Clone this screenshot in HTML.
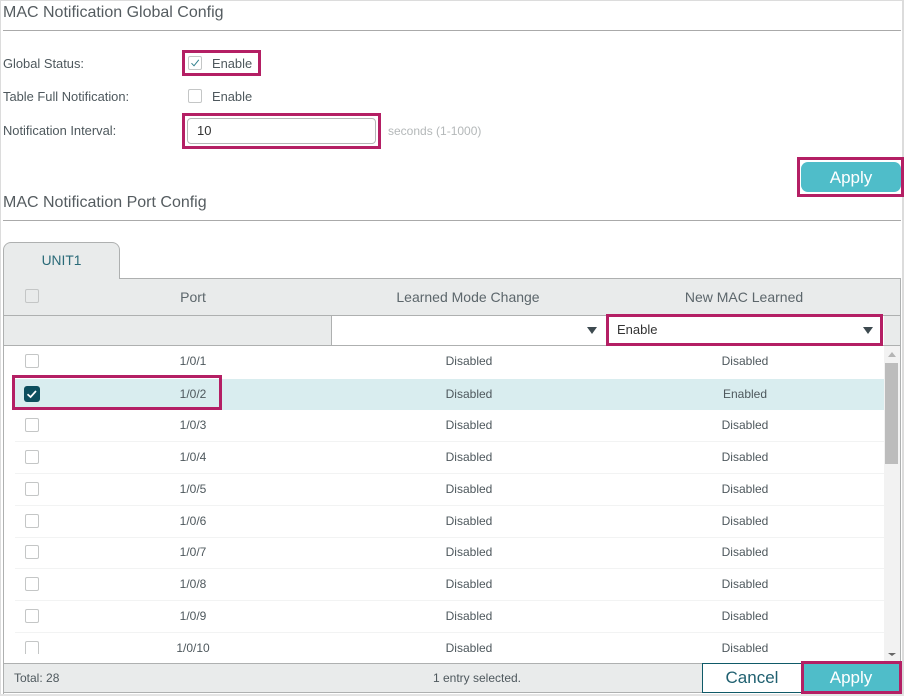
<!DOCTYPE html>
<html><head><meta charset="utf-8"><style>
html,body{margin:0;padding:0;background:#fff}
#p{position:relative;width:904px;height:696px;overflow:hidden;background:#fff;font-family:"Liberation Sans",sans-serif;color:#4a5458}
#p div{position:absolute;box-sizing:border-box}
.t{white-space:nowrap;line-height:16px;height:16px}
.h{font-size:16px;color:#555c60;left:3px}
.l{font-size:12.9px;left:3px;color:#4e585d}
.c{text-align:center;font-size:12px;color:#4e585d}
.th{text-align:center;font-size:14px;color:#5c666b}
.cb{width:14px;height:14px;border:1px solid #c4c6c6;border-radius:2px;background:#fff}
.m{border:3px solid #b41f64}
.ln{height:1px;background:#f2f3f3;left:15px;width:869px}
.ar{width:0;height:0;border-left:5px solid transparent;border-right:5px solid transparent;border-top:7px solid #3d4a50}
</style></head><body><div id="p">
<div style="left:0;top:0;width:904px;height:1px;background:#dcdcdc"></div>
<div style="left:0;top:0;width:1px;height:696px;background:#dcdcdc"></div>
<div style="left:902px;top:0;width:2px;height:696px;background:#dcdcdc"></div>
<div style="left:0;top:694px;width:904px;height:2px;background:#e4e4e4"></div>

<div class="t h" style="top:5px">MAC Notification Global Config</div>
<div style="left:3px;top:30px;width:898px;height:1px;background:#aaa"></div>
<div class="t l" style="top:56px">Global Status:</div>
<div class="t l" style="top:89px">Table Full Notification:</div>
<div class="t l" style="top:123px">Notification Interval:</div>

<div class="m" style="left:182px;top:50px;width:79px;height:26px"></div>
<div class="cb" style="left:188px;top:56px"><svg style="position:absolute;left:0;top:0" width="12" height="12" viewBox="0 0 12 12"><path d="M2.5 6.2L5 8.8L9.8 2.8" fill="none" stroke="#2f7f8c" stroke-width="1"/></svg></div>
<div class="t l" style="left:212px;top:56px">Enable</div>
<div class="cb" style="left:188px;top:89px"></div>
<div class="t l" style="left:212px;top:89px">Enable</div>

<div class="m" style="left:182px;top:113px;width:199px;height:36px"></div>
<div style="left:187px;top:118px;width:189px;height:26px;border:1px solid #b5b7b7;border-radius:4px;background:#fff"></div>
<div class="t" style="left:197px;top:123px;font-size:13px;color:#333">10</div>
<div class="t" style="left:388px;top:123px;font-size:12px;color:#b4b8b9">seconds (1-1000)</div>

<div class="m" style="left:797px;top:157px;width:107px;height:40px"></div>
<div style="left:801px;top:162px;width:100px;height:30px;background:#4fbdc9;border-radius:7px"></div>
<div class="t" style="left:801px;top:169px;width:100px;height:18px;line-height:18px;text-align:center;color:#fff;font-size:17px">Apply</div>

<div class="t h" style="top:195px">MAC Notification Port Config</div>
<div style="left:3px;top:220px;width:898px;height:1px;background:#aaa"></div>

<div style="left:3px;top:242px;width:117px;height:37px;background:#e9ebeb;border:1px solid #aeb0b0;border-bottom:none;border-radius:8px 8px 0 0;z-index:2"></div>
<div class="t" style="left:4px;top:253px;width:115px;text-align:center;font-size:13.8px;color:#2a6a78;z-index:3">UNIT1</div>

<div style="left:3px;top:278px;width:898px;height:68px;background:#e9ebeb;border-top:1px solid #aeb0b0;border-left:1px solid #aeb0b0;border-right:1px solid #aeb0b0"></div>
<div style="left:3px;top:315px;width:898px;height:1px;background:#aeb0b0"></div>
<div style="left:3px;top:345px;width:898px;height:1px;background:#aeb0b0"></div>
<div style="left:3px;top:278px;width:1px;height:416px;background:#aeb0b0"></div>
<div style="left:900px;top:278px;width:1px;height:416px;background:#aeb0b0"></div>

<div class="cb" style="left:25px;top:289px;background:#e9ebeb"></div>
<div class="t th" style="left:93px;top:289px;width:200px">Port</div>
<div class="t th" style="left:368px;top:289px;width:200px">Learned Mode Change</div>
<div class="t th" style="left:644px;top:289px;width:200px">New MAC Learned</div>

<div style="left:331px;top:316px;width:553px;height:29px;background:#fff;border-left:1px solid #aeb0b0"></div>
<div class="ar" style="left:587px;top:327px"></div>
<div class="m" style="left:606px;top:314px;width:277px;height:32px;background:#fff"></div>
<div class="t" style="left:617px;top:322px;font-size:13px;color:#333">Enable</div>
<div class="ar" style="left:863px;top:327px"></div>

<div style="left:15px;top:379px;width:869px;height:31px;background:#d9edef"></div>
<div class="ln" style="top:441px"></div><div class="ln" style="top:473px"></div><div class="ln" style="top:505px"></div><div class="ln" style="top:537px"></div><div class="ln" style="top:568px"></div><div class="ln" style="top:600px"></div><div class="ln" style="top:632px"></div>

<div class="cb" style="left:25px;top:354px"></div>
<div class="cb" style="left:25px;top:418px"></div>
<div class="cb" style="left:25px;top:450px"></div>
<div class="cb" style="left:25px;top:482px"></div>
<div class="cb" style="left:25px;top:514px"></div>
<div class="cb" style="left:25px;top:545px"></div>
<div class="cb" style="left:25px;top:577px"></div>
<div class="cb" style="left:25px;top:609px"></div>
<div style="left:25px;top:641px;width:14px;height:13px;border:1px solid #c4c6c6;border-bottom:none;border-radius:2px 2px 0 0"></div>

<div class="m" style="left:12px;top:375px;width:210px;height:35px"></div>
<div style="left:24px;top:386px;width:16px;height:16px;background:#0d4f5e;border-radius:3px"><svg style="position:absolute;left:0;top:0" width="16" height="16" viewBox="0 0 16 16"><path d="M3.5 8.2L6.6 11L12 5" fill="none" stroke="#fff" stroke-width="1.7"/></svg></div>

<div class="t c" style="left:93px;top:353px;width:200px">1/0/1</div><div class="t c" style="left:369px;top:353px;width:200px">Disabled</div><div class="t c" style="left:645px;top:353px;width:200px">Disabled</div>
<div class="t c" style="left:93px;top:386px;width:200px">1/0/2</div><div class="t c" style="left:369px;top:386px;width:200px">Disabled</div><div class="t c" style="left:645px;top:386px;width:200px">Enabled</div>
<div class="t c" style="left:93px;top:417px;width:200px">1/0/3</div><div class="t c" style="left:369px;top:417px;width:200px">Disabled</div><div class="t c" style="left:645px;top:417px;width:200px">Disabled</div>
<div class="t c" style="left:93px;top:449px;width:200px">1/0/4</div><div class="t c" style="left:369px;top:449px;width:200px">Disabled</div><div class="t c" style="left:645px;top:449px;width:200px">Disabled</div>
<div class="t c" style="left:93px;top:481px;width:200px">1/0/5</div><div class="t c" style="left:369px;top:481px;width:200px">Disabled</div><div class="t c" style="left:645px;top:481px;width:200px">Disabled</div>
<div class="t c" style="left:93px;top:513px;width:200px">1/0/6</div><div class="t c" style="left:369px;top:513px;width:200px">Disabled</div><div class="t c" style="left:645px;top:513px;width:200px">Disabled</div>
<div class="t c" style="left:93px;top:544px;width:200px">1/0/7</div><div class="t c" style="left:369px;top:544px;width:200px">Disabled</div><div class="t c" style="left:645px;top:544px;width:200px">Disabled</div>
<div class="t c" style="left:93px;top:576px;width:200px">1/0/8</div><div class="t c" style="left:369px;top:576px;width:200px">Disabled</div><div class="t c" style="left:645px;top:576px;width:200px">Disabled</div>
<div class="t c" style="left:93px;top:608px;width:200px">1/0/9</div><div class="t c" style="left:369px;top:608px;width:200px">Disabled</div><div class="t c" style="left:645px;top:608px;width:200px">Disabled</div>
<div class="t c" style="left:93px;top:640px;width:200px">1/0/10</div><div class="t c" style="left:369px;top:640px;width:200px">Disabled</div><div class="t c" style="left:645px;top:640px;width:200px">Disabled</div>

<div style="left:884px;top:346px;width:16px;height:317px;background:#f2f2f2"></div>
<div style="left:885px;top:363px;width:13px;height:101px;background:#bcbcbc"></div>
<div style="left:888px;top:352px;width:0;height:0;border-left:4px solid transparent;border-right:4px solid transparent;border-bottom:5px solid #b5b5b5"></div>
<div style="left:888px;top:653px;width:0;height:0;border-left:4px solid transparent;border-right:4px solid transparent;border-top:3px solid #666"></div>

<div style="left:4px;top:663px;width:896px;height:30px;background:#e9ebeb;border-top:1px solid #aeb0b0;border-bottom:1px solid #aeb0b0"></div>
<div class="t" style="left:14px;top:670px;font-size:12px;color:#4e585d">Total: 28</div>
<div class="t c" style="left:377px;top:670px;width:200px">1 entry selected.</div>
<div style="left:702px;top:663px;width:101px;height:30px;background:#fff;border:1px solid #0f5a68"></div>
<div class="t" style="left:702px;top:669px;width:100px;height:18px;line-height:18px;text-align:center;color:#1f6070;font-size:17px">Cancel</div>
<div style="left:801px;top:661px;width:101px;height:33px;background:#4fbdc9;border:3px solid #b41f64"></div>
<div class="t" style="left:801px;top:669px;width:100px;height:18px;line-height:18px;text-align:center;color:#fff;font-size:17px">Apply</div>
</div></body></html>
